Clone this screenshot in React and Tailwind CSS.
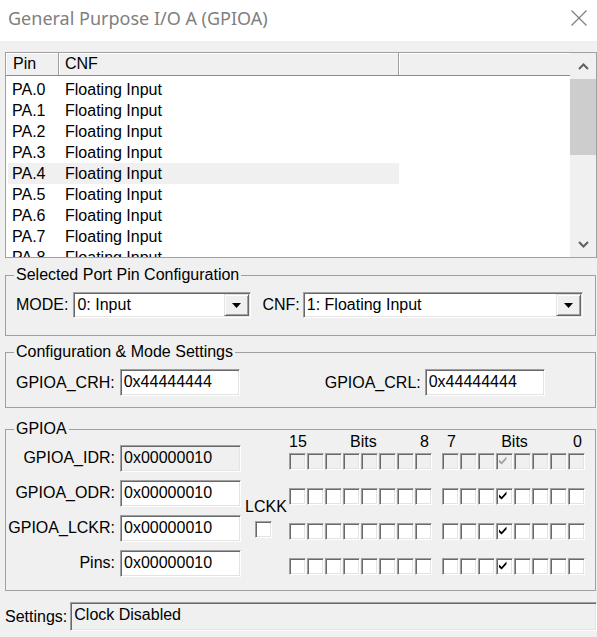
import React from "react";

const sunkenW =
  "border border-t-[#a0a0a0] border-l-[#a0a0a0] border-r-white border-b-white shadow-[inset_1px_1px_0_#696969,inset_-1px_-1px_0_#e3e3e3] bg-white";
const sunkenG =
  "border border-t-[#a0a0a0] border-l-[#a0a0a0] border-r-white border-b-white shadow-[inset_1px_1px_0_#696969,inset_-1px_-1px_0_#e3e3e3] bg-[#f0f0f0]";

function Check({ color }) {
  return (
    <svg width="8" height="9" viewBox="0 0 8 9" className="ml-[2px] mt-[2px] shrink-0">
      <polygon points="0,3.5 2.6,6 7.5,0.5 7.5,3.2 2.6,8.6 0,6.2" fill={color} />
    </svg>
  );
}

function Box({ checked, disabled }) {
  return (
    <div className={`w-[17px] h-[17px] flex items-start ${disabled ? sunkenG : sunkenW}`}>
      {checked ? <Check color={disabled ? "#a0a0a0" : "#000"} /> : null}
    </div>
  );
}

function BitGroup({ checkIdx, disabled }) {
  const items = [0, 1, 2, 3, 4, 5, 6, 7];
  return (
    <div className="flex gap-[1px]">
      {items.map((i) => (
        <Box key={i} checked={i === checkIdx} disabled={disabled} />
      ))}
    </div>
  );
}

function Combo({ width, text }) {
  return (
    <div className={`${sunkenW} h-[26px] flex items-center ${width}`}>
      <span className="flex-1 pl-[3px] pb-[1px] whitespace-nowrap">{text}</span>
      <div className="w-[25px] h-[22px] mr-[1px] bg-[#f0f0f0] border border-t-[#e3e3e3] border-l-[#e3e3e3] border-b-[#696969] border-r-[#696969] shadow-[inset_1px_1px_0_#ffffff,inset_-1px_-1px_0_#a0a0a0] flex items-center justify-center">
        <svg width="9" height="5" viewBox="0 0 9 5">
          <polygon points="0,0 9,0 4.5,5" fill="#000" />
        </svg>
      </div>
    </div>
  );
}

function Field({ text, gray, width }) {
  return (
    <div className={`${gray ? sunkenG : sunkenW} h-[27px] ${width} flex items-center pl-[3px] pb-[1px] whitespace-nowrap`}>
      {text}
    </div>
  );
}

export default function App() {
  const rows = ["PA.0", "PA.1", "PA.2", "PA.3", "PA.4", "PA.5", "PA.6", "PA.7", "PA.8"];
  const gpioRows = [
    { label: "GPIOA_IDR:", gray: true },
    { label: "GPIOA_ODR:", gray: false },
    { label: "GPIOA_LCKR:", gray: false },
    { label: "Pins:", gray: false },
  ];
  return (
    <div className="w-[597px] h-[637px] bg-[#f0f0f0] overflow-hidden font-['Liberation_Sans',Arial,sans-serif] text-[16px] leading-[18px] text-black">
      {/* Title bar */}
      <div className="h-[41px] bg-white flex items-center justify-between pl-[8px] pr-[10px] pb-[5px]">
        <span className="font-['Noto_Sans',sans-serif] text-[18px] leading-[24px] text-[#808080] whitespace-nowrap">
          General Purpose I/O A (GPIOA)
        </span>
        <svg width="16" height="16" viewBox="0 0 16 16">
          <path d="M0.5 0.5 L15.5 15.5 M15.5 0.5 L0.5 15.5" stroke="#7a7a7a" strokeWidth="1.1" />
        </svg>
      </div>

      {/* List view */}
      <div className="mt-[11px] ml-[5px] w-[592px] h-[206px] border border-[#a0a0a0] bg-white flex overflow-hidden">
        <div className="flex-1 flex flex-col overflow-hidden">
          <div className="h-[23px] shrink-0 flex bg-[#f0f0f0] border-b border-[#8a8a8a]">
            <div className="w-[53px] border-r border-[#a0a0a0] shadow-[inset_1px_1px_0_#ffffff] pl-[7px] flex items-center">
              Pin
            </div>
            <div className="w-[340px] border-r border-[#a0a0a0] shadow-[inset_1px_1px_0_#ffffff] pl-[6px] flex items-center">
              CNF
            </div>
            <div className="flex-1 shadow-[inset_1px_1px_0_#ffffff]"></div>
          </div>
          <div className="pt-[3px]">
            {rows.map((r, i) => (
              <div
                key={r}
                className={`ml-[2px] w-[391px] h-[21px] flex items-center whitespace-nowrap ${i === 4 ? "bg-[#f0f0f0]" : "bg-white"}`}
              >
                <span className="w-[57px] pl-[4px]">{r}</span>
                <span>Floating Input</span>
              </div>
            ))}
          </div>
        </div>
        <div className="w-[26px] flex flex-col bg-[#f0f0f0]">
          <div className="h-[26px] flex items-center justify-center">
            <svg width="11" height="7" viewBox="0 0 11 7">
              <polyline points="1,6 5.5,1.5 10,6" fill="none" stroke="#606060" strokeWidth="2" />
            </svg>
          </div>
          <div className="h-[76px] bg-[#cdcdcd]"></div>
          <div className="flex-1"></div>
          <div className="h-[26px] flex items-center justify-center">
            <svg width="11" height="7" viewBox="0 0 11 7">
              <polyline points="1,1 5.5,5.5 10,1" fill="none" stroke="#606060" strokeWidth="2" />
            </svg>
          </div>
        </div>
      </div>

      {/* Selected Port Pin Configuration */}
      <fieldset className="ml-[5px] mt-[8px] w-[591px] border border-[#a0a0a0] p-0">
        <legend className="ml-[8px] px-[2px] leading-[18px]">Selected Port Pin Configuration</legend>
        <div className="flex items-center pl-[10px] pt-[8px] pb-[17px]">
          <span>MODE:</span>
          <div className="ml-[5px]">
            <Combo width="w-[178px]" text="0: Input" />
          </div>
          <span className="ml-[11px]">CNF:</span>
          <div className="ml-[3px]">
            <Combo width="w-[280px]" text="1: Floating Input" />
          </div>
        </div>
      </fieldset>

      {/* Configuration & Mode Settings */}
      <fieldset className="ml-[5px] mt-[7px] w-[591px] border border-[#a0a0a0] p-0">
        <legend className="ml-[8px] px-[2px] leading-[18px]">Configuration &amp; Mode Settings</legend>
        <div className="flex items-center pl-[10px] pt-[8px] pb-[11px]">
          <span>GPIOA_CRH:</span>
          <div className="ml-[5px]">
            <Field text="0x44444444" width="w-[120px]" />
          </div>
          <span className="ml-[85px]">GPIOA_CRL:</span>
          <div className="ml-[4px]">
            <Field text="0x44444444" width="w-[120px]" />
          </div>
        </div>
      </fieldset>

      {/* GPIOA */}
      <fieldset className="ml-[5px] mt-[12px] w-[591px] border border-[#a0a0a0] p-0">
        <legend className="ml-[8px] px-[2px] leading-[18px]">GPIOA</legend>
        <div className="flex items-start pb-[13px]">
          <div className="flex flex-col gap-[8px] pt-[7px]">
            {gpioRows.map((g) => (
              <div key={g.label} className="flex items-center h-[27px]">
                <span className="w-[109px] text-right whitespace-nowrap pb-[1px]">{g.label}</span>
                <div className="ml-[5px]">
                  <Field text="0x00000010" gray={g.gray} width="w-[121px]" />
                </div>
              </div>
            ))}
          </div>
          <div className="ml-[4px] w-[44px] mt-[60px] flex flex-col">
            <span>LCKK</span>
            <div className="mt-[5px] ml-[10px]">
              <Box />
            </div>
          </div>
          <div className="-mt-[5px] flex flex-col">
            <div className="h-[20px] flex gap-[10px]">
              <div className="w-[143px] flex justify-between pr-[3px]">
                <span>15</span>
                <span>Bits</span>
                <span>8</span>
              </div>
              <div className="w-[143px] flex justify-between pl-[5px] pr-[3px]">
                <span>7</span>
                <span>Bits</span>
                <span>0</span>
              </div>
            </div>
            <div className="flex flex-col gap-[18px]">
              {[0, 1, 2, 3].map((r) => (
                <div key={r} className="flex gap-[10px]">
                  <BitGroup checkIdx={-1} disabled={r === 0} />
                  <BitGroup checkIdx={3} disabled={r === 0} />
                </div>
              ))}
            </div>
          </div>
        </div>
      </fieldset>

      {/* Settings */}
      <div className="mt-[11px] flex items-center pl-[5px]">
        <span>Settings:</span>
        <div className={`${sunkenG} ml-[3px] flex-1 h-[29px] flex items-center pl-[3px] pb-[3px]`}>
          Clock Disabled
        </div>
      </div>
    </div>
  );
}
